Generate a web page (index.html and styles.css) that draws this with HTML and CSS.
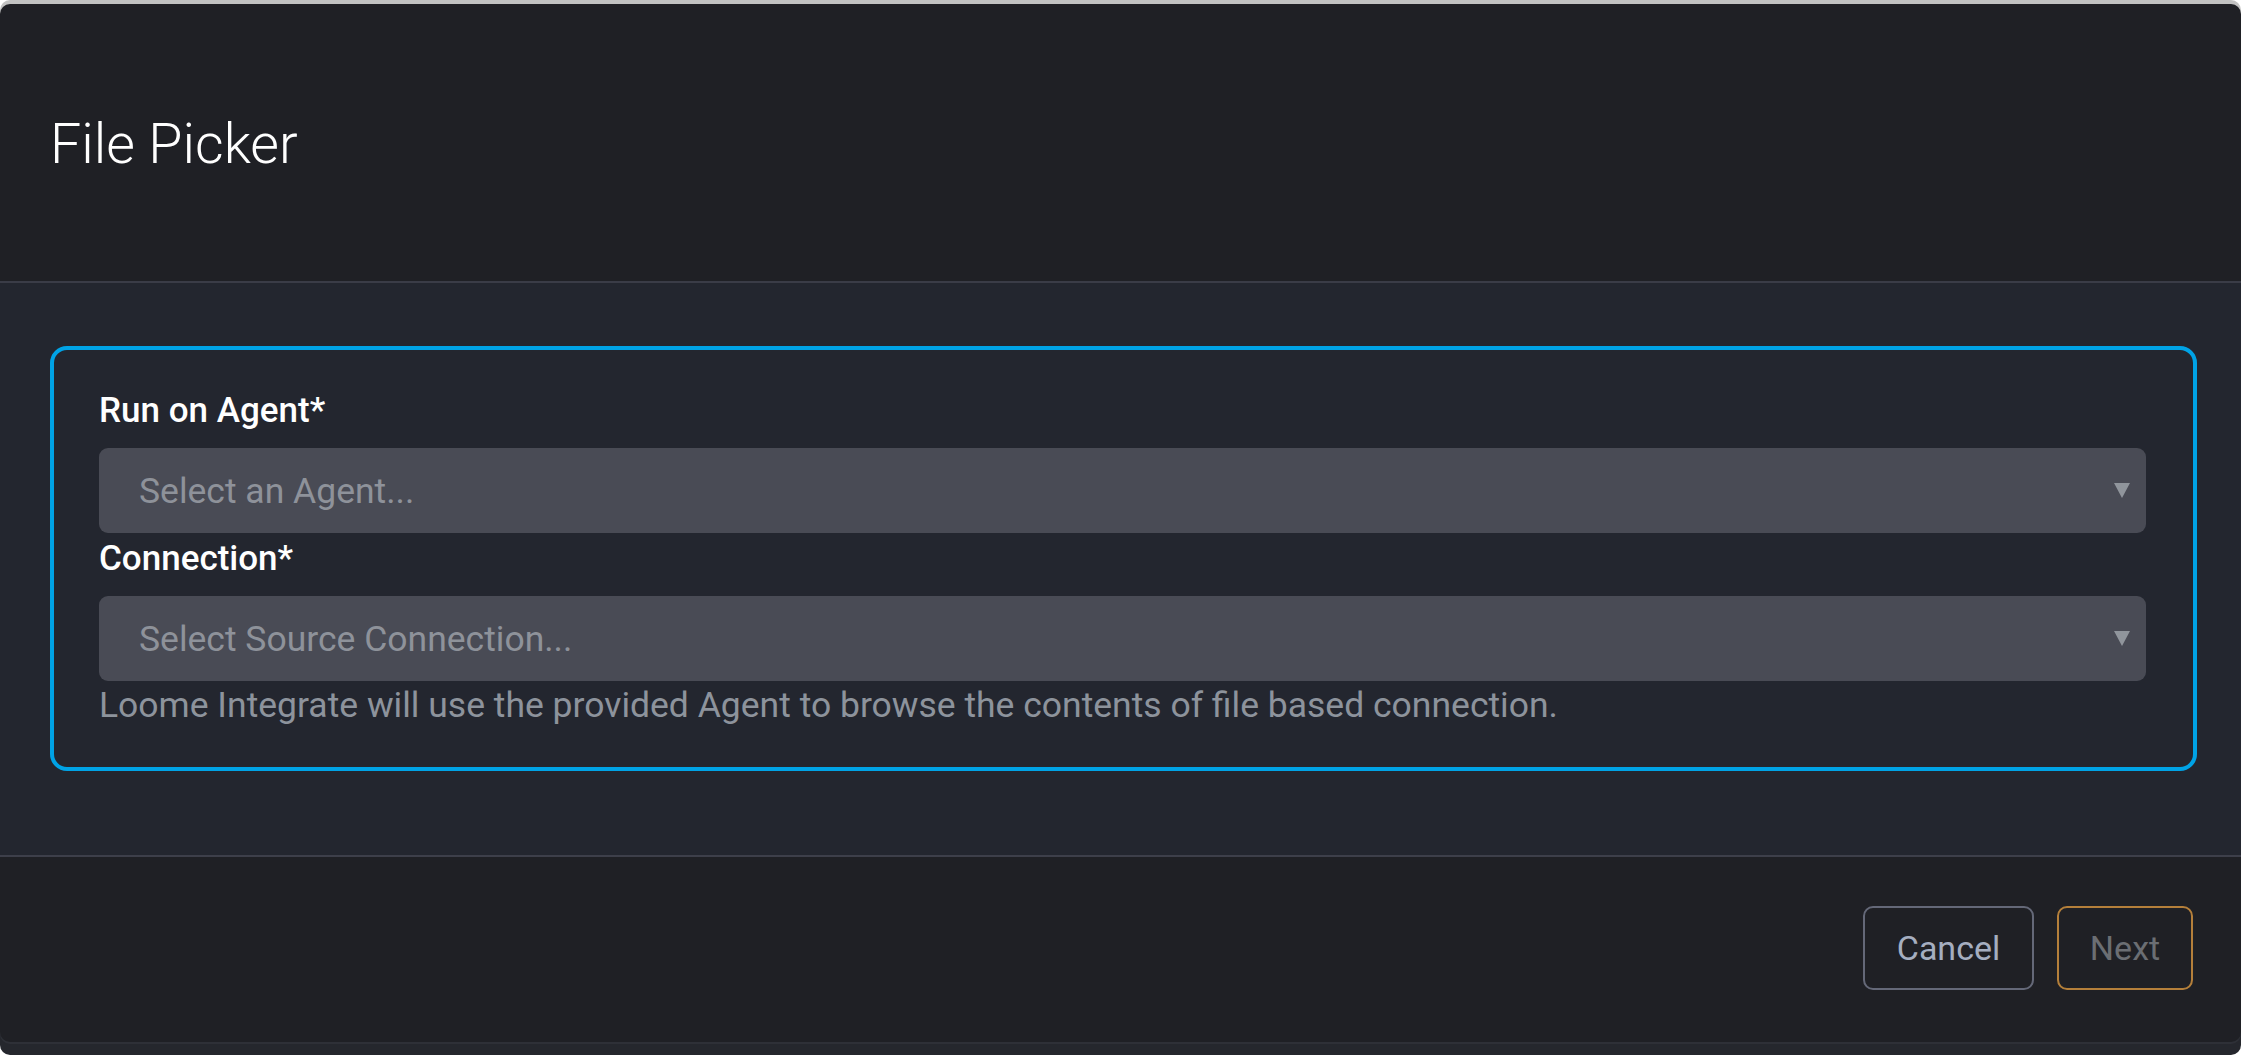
FILE: index.html
```html
<!DOCTYPE html>
<html>
<head>
    <title>File Picker</title>
    <link rel="stylesheet" href="styles.css">
</head>
<body>
    <!-- File Picker Modal -->
    <div class="modal">
        <div class="modal-header">
            <h1>File Picker</h1>
        </div>

        <div class="modal-body">
            <div class="picker-box">
                <label class="field-label">Run on Agent*</label>
                <div class="select">
                    <span class="placeholder">Select an Agent...</span>
                </div>

                <label class="field-label">Connection*</label>
                <div class="select">
                    <span class="placeholder">Select Source Connection...</span>
                </div>

                <p class="help-text">Loome Integrate will use the provided Agent to browse the contents of file based connection.</p>
            </div>
        </div>

        <div class="modal-footer">
            <button class="btn btn-cancel">Cancel</button>
            <button class="btn btn-next" disabled>Next</button>
        </div>
    </div>
</body>
</html>
```

FILE: styles.css
```css
* {
    margin: 0;
    padding: 0;
    box-sizing: border-box;
    font-family: Roboto, 'Liberation Sans', sans-serif;
}

body {
    background: #fff;
    min-height: 100vh;
}

/* Modal Shell */
.modal {
    margin: 4px 2px 0 0;
    height: 1038px;
    display: flex;
    flex-direction: column;
    background: #1f2025;
    border-radius: 10px;
    overflow: hidden;
    box-shadow: 0 -4px 0 #c2c2c2, 0 2px 0 #2e3037, 0 13px 0 #25272d;
}

.modal-header {
    height: 279px;
    padding: 107px 50px 0;
    border-bottom: 2px solid #3a3c47;
}

.modal-header h1 {
    color: #fff;
    font-size: 55.5px;
    font-weight: 300;
    line-height: 67px;
}

/* Body */
.modal-body {
    flex: 1;
    background: #23262f;
    padding: 63px 44px 0 50px;
}

.picker-box {
    border: 4px solid #00a3e6;
    border-radius: 17px;
    padding: 40px 47px 43px 45px;
}

.field-label {
    display: block;
    color: #fff;
    font-size: 35px;
    font-weight: 500;
    line-height: 42px;
    margin-bottom: 16px;
}

.select {
    height: 85px;
    background: #494b55;
    border-radius: 9px;
    display: flex;
    align-items: center;
    justify-content: space-between;
    padding: 0 16px 0 40px;
    margin-bottom: 5px;
}

.select::after {
    content: '';
    border-left: 8px solid transparent;
    border-right: 8px solid transparent;
    border-top: 15px solid #90959c;
}

.placeholder {
    color: #8e929a;
    font-size: 35.5px;
}

.help-text {
    color: #8d939c;
    font-size: 35.5px;
    line-height: 38px;
    margin-top: 3px;
}

/* Footer */
.modal-footer {
    height: 187px;
    border-top: 2px solid #3d3f4a;
    display: flex;
    justify-content: flex-end;
    align-items: flex-start;
    gap: 23px;
    padding: 49px 48px 0 0;
}

.btn {
    height: 84px;
    background: transparent;
    border: 2px solid;
    border-radius: 10px;
    font-size: 34px;
    padding: 0 30px;
}

.btn-cancel {
    width: 171px;
    border-color: #646878;
    color: #a5aec0;
    cursor: pointer;
}

.btn-next {
    width: 136px;
    border-color: #b47f3a;
    color: #6b6e73;
}
```
